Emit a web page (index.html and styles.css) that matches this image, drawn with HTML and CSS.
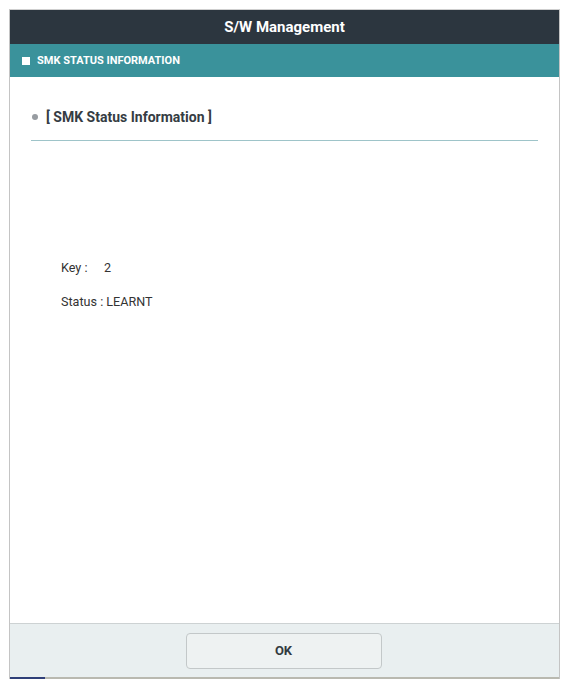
FILE: index.html
```html
<!DOCTYPE html>
<html>
<head>
<meta charset="utf-8">
<link rel="stylesheet" href="styles.css">
</head>
<body>
<div class="dialog">
  <div class="titlebar">S/W Management</div>
  <div class="subbar"><span class="square"></span><span class="subtitle">SMK STATUS INFORMATION</span></div>
  <div class="content">
    <div class="heading"><span class="dot"></span><span class="heading-text">[ SMK Status Information ]</span></div>
    <div class="info">
      <div class="row"><span class="label">Key :</span>2</div>
      <div class="row">Status : LEARNT</div>
    </div>
  </div>
  <div class="footer">
    <button class="ok">OK</button>
  </div>
  <div class="bottom"><span class="tab"></span><span class="rest"></span></div>
</div>
</body>
</html>
```
FILE: styles.css
```css
html, body { margin: 0; padding: 0; background: #ffffff; }
body { font-family: Roboto, "Liberation Sans", sans-serif; }
.dialog {
  margin: 9px 0 0 9px;
  width: 549px;
  border-top: 1px solid #cfcfcf;
  border-left: 1px solid #c4c4c4;
  border-right: 1px solid #c4c4c4;
  display: flex;
  flex-direction: column;
}
.titlebar {
  height: 34px;
  background: #2c363f;
  color: #ffffff;
  font-weight: 700;
  font-size: 15px;
  display: flex;
  align-items: center;
  justify-content: center;
}
.subbar {
  height: 33px;
  background: #3a929b;
  display: flex;
  align-items: center;
  padding-left: 12px;
  color: #ffffff;
}
.square { width: 8px; height: 8px; background: #ffffff; margin-right: 7px; }
.subtitle { font-size: 11px; font-weight: 700; letter-spacing: 0; }
.content { height: 546px; display: flex; flex-direction: column; }
.heading {
  margin: 30px 21px 0 21px;
  height: 33px;
  border-bottom: 1px solid #9ec4c9;
  display: flex;
  align-items: flex-start;
  line-height: 20px;
}
.dot { width: 6px; height: 6px; border-radius: 50%; background: #979ca1; margin: 7px 8px 0 1px; }
.heading-text { font-size: 14px; font-weight: 700; color: #353c43; }
.info { margin: 119px 0 0 51px; display: flex; flex-direction: column; gap: 18px; }
.row { font-size: 12.6px; color: #333333; line-height: 16px; }
.label { display: inline-block; width: 43px; }
.footer {
  height: 53px;
  background: #e9eff0;
  border-top: 1px solid #cdd2d3;
  display: flex;
  justify-content: center;
  align-items: center;
}
.ok {
  width: 196px;
  height: 36px;
  background: #eef2f2;
  border: 1px solid #c3c8c9;
  border-radius: 4px;
  font-family: Roboto, "Liberation Sans", sans-serif;
  font-weight: 700;
  font-size: 13px;
  color: #333a40;
  margin-left: -2px;
}
.bottom { display: flex; height: 2px; }
.tab { width: 35px; background: #2f3f78; }
.rest { flex: 1; background: #b9b9b0; }
```
